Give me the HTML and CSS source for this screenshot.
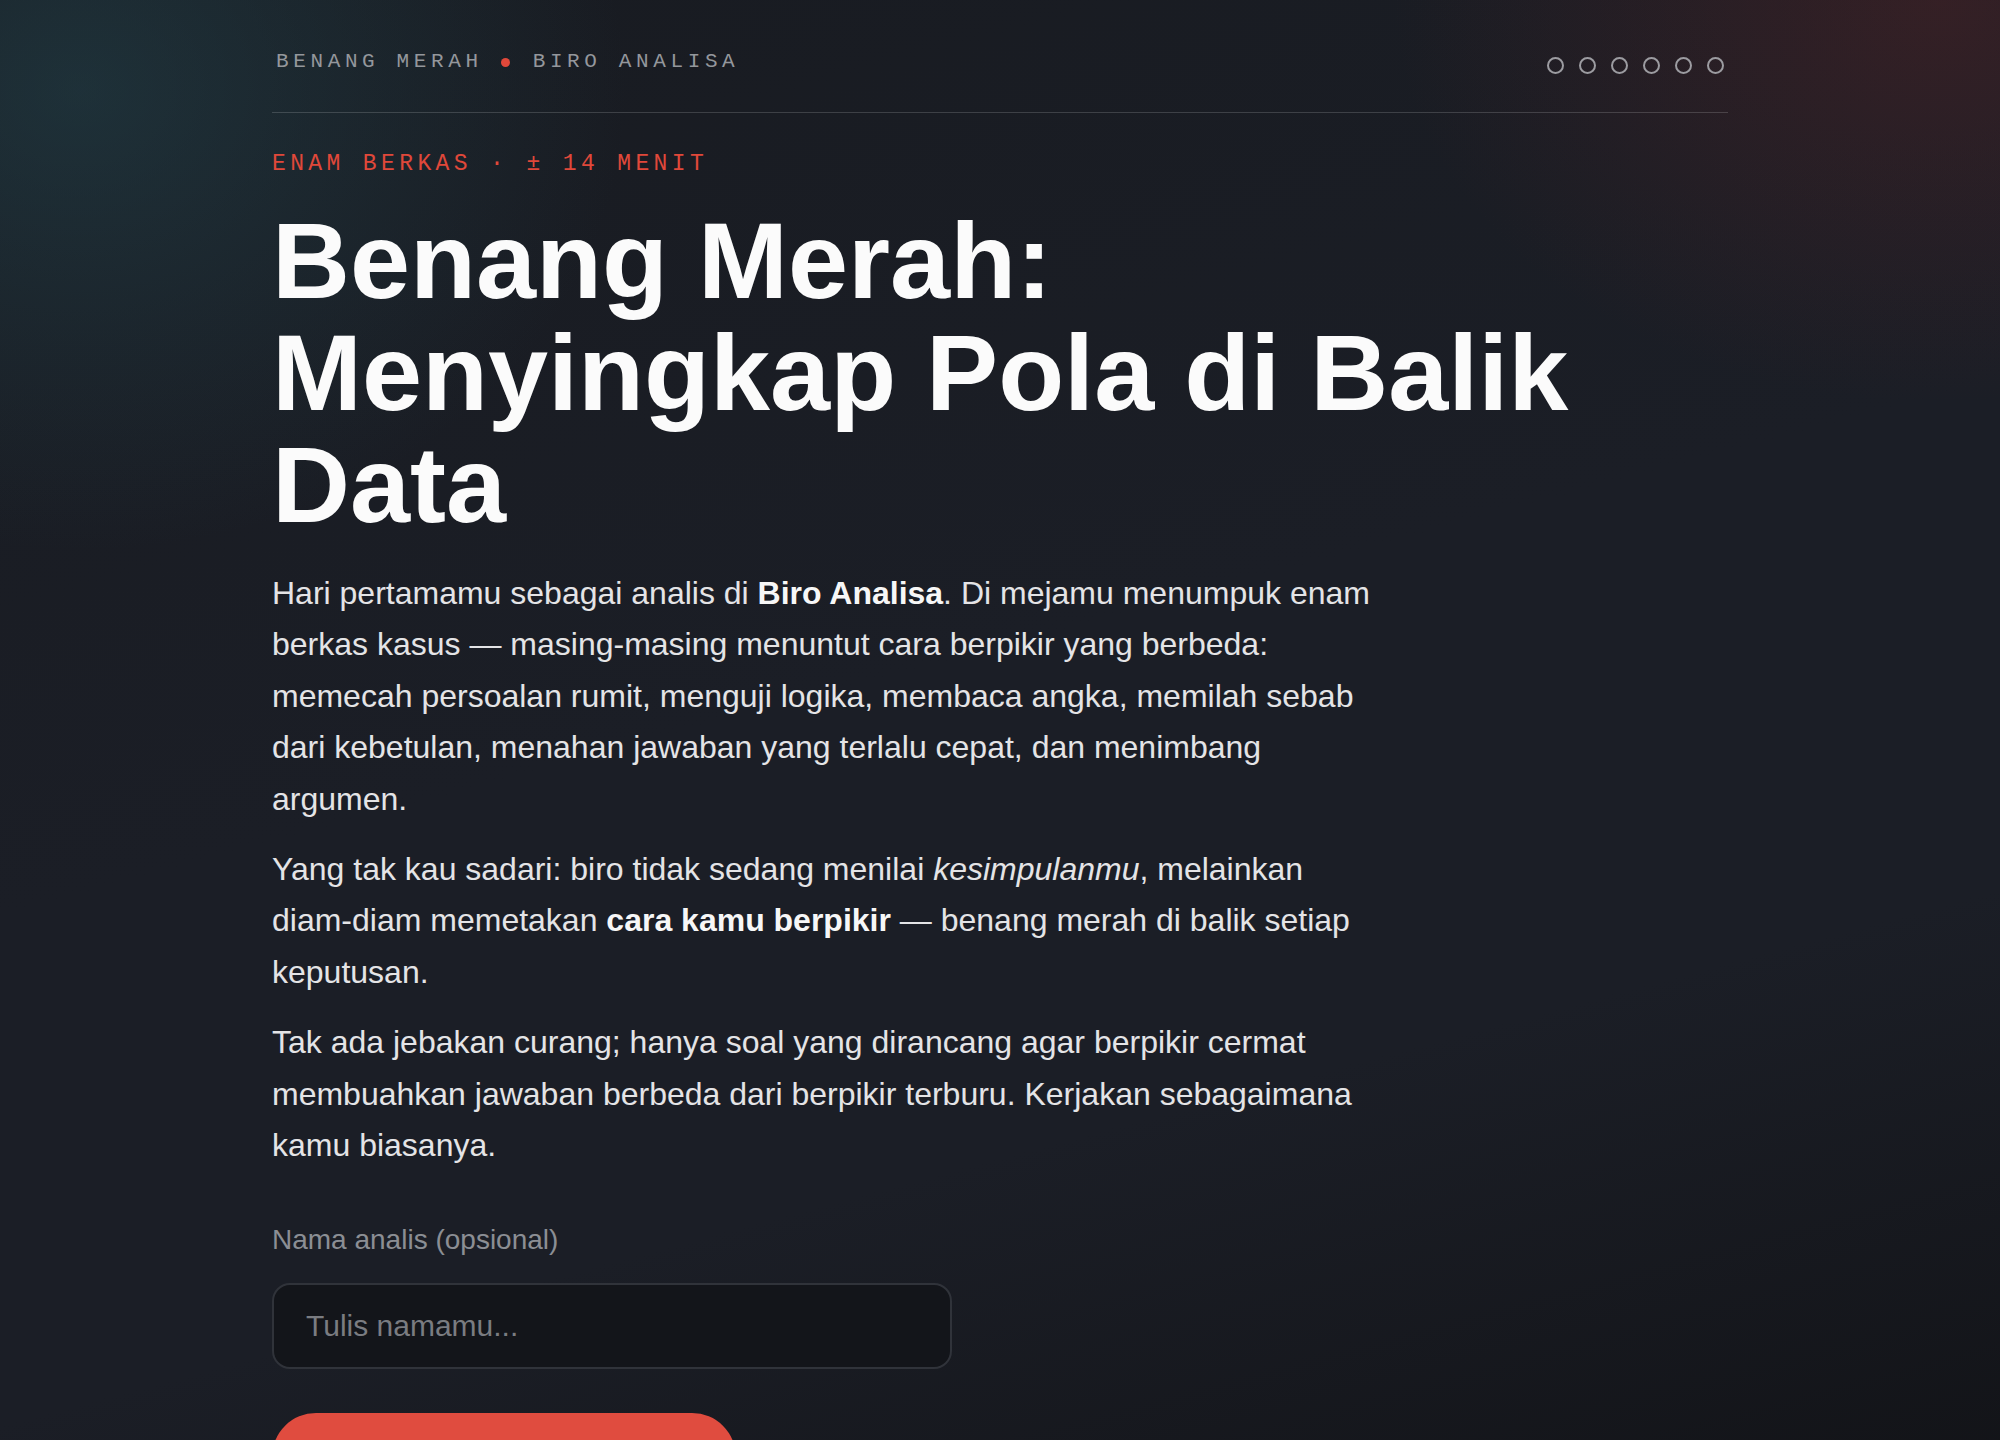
FILE: index.html
```html
<!DOCTYPE html>
<html lang="id">
<head>
<meta charset="utf-8">
<title>Benang Merah — Biro Analisa</title>
<link rel="stylesheet" href="styles.css">
</head>
<body>
<main class="page">
  <header class="topbar">
    <div class="brand">
      <span class="brand-name">BENANG MERAH</span>
      <span class="brand-dot"></span>
      <span class="brand-name">BIRO ANALISA</span>
    </div>
    <div class="progress">
      <span class="pip"></span><span class="pip"></span><span class="pip"></span><span class="pip"></span><span class="pip"></span><span class="pip"></span>
    </div>
  </header>

  <p class="kicker">ENAM BERKAS · ± 14 MENIT</p>
  <h1 class="title">Benang Merah:<br>Menyingkap Pola di Balik Data</h1>

  <div class="intro">
    <p>Hari pertamamu sebagai analis di <strong>Biro Analisa</strong>. Di mejamu menumpuk enam berkas kasus — masing-masing menuntut cara berpikir yang berbeda: memecah persoalan rumit, menguji logika, membaca angka, memilah sebab dari kebetulan, menahan jawaban yang terlalu cepat, dan menimbang argumen.</p>
    <p>Yang tak kau sadari: biro tidak sedang menilai <em>kesimpulanmu</em>, melainkan diam-diam memetakan <strong>cara kamu berpikir</strong> — benang merah di balik setiap keputusan.</p>
    <p>Tak ada jebakan curang; hanya soal yang dirancang agar berpikir cermat membuahkan jawaban berbeda dari berpikir terburu. Kerjakan sebagaimana kamu biasanya.</p>
  </div>

  <form class="start">
    <label class="field-label" for="nama">Nama analis (opsional)</label>
    <input class="field-input" id="nama" type="text" placeholder="Tulis namamu...">
    <button class="start-btn" type="button">Buka Berkas Pertama →</button>
  </form>
</main>
</body>
</html>
```

FILE: styles.css
```css
* { box-sizing: border-box; }

html, body { margin: 0; padding: 0; }

body {
  min-height: 1440px;
  font-family: "Liberation Sans", Arial, sans-serif;
  color: #e6e6e8;
  background-color: #1a1d24;
  background-image:
    radial-gradient(ellipse 760px 640px at 4% 6%, rgba(38, 78, 88, 0.42), rgba(38, 78, 88, 0) 72%),
    radial-gradient(ellipse 760px 560px at 97% 0%, rgba(110, 38, 40, 0.32), rgba(110, 38, 40, 0) 72%),
    linear-gradient(165deg, #181b21 0%, #1b1e26 45%, #1b1e26 70%, #121317 100%);
  background-repeat: no-repeat;
}

.page {
  width: 1456px;
  margin: 0 auto;
}

/* ---------- top bar ---------- */
.topbar {
  display: flex;
  justify-content: space-between;
  align-items: flex-end;
  padding: 50px 0 38px;
  border-bottom: 1px solid rgba(255, 255, 255, 0.16);
}

.brand {
  display: flex;
  align-items: center;
  font-family: "Liberation Mono", "DejaVu Sans Mono", monospace;
  font-size: 21px;
  line-height: 24px;
  letter-spacing: 0.22em;
  color: #94979c;
  padding-left: 4px;
}

.brand-dot {
  width: 9px;
  height: 9px;
  border-radius: 50%;
  background: #e0483a;
  margin: 0 23px 0 18px;
}

.progress {
  display: flex;
  gap: 15px;
  padding-right: 4px;
}

.pip {
  width: 17px;
  height: 17px;
  border-radius: 50%;
  border: 2px solid #9c9ca1;
}

/* ---------- heading ---------- */
.kicker {
  margin: 38px 0 0;
  font-family: "Liberation Mono", "DejaVu Sans Mono", monospace;
  font-size: 23px;
  line-height: 26px;
  letter-spacing: 0.19em;
  color: #e0483a;
}

.title {
  margin: 28px 0 0;
  font-family: "Liberation Sans", Arial, sans-serif;
  font-weight: 700;
  font-size: 108px;
  line-height: 112px;
  color: #fbfbfb;
}

/* ---------- intro ---------- */
.intro {
  max-width: 1104px;
  margin-top: 27px;
  margin-bottom: 49px;
  display: flex;
  flex-direction: column;
  gap: 19px;
}

.intro p {
  margin: 0;
  font-size: 32px;
  line-height: 51.4px;
  color: #e4e4e6;
}

.intro strong {
  font-weight: 700;
  color: #f7f7f7;
}

.intro em {
  font-style: italic;
}

/* ---------- form ---------- */
.start {
  display: flex;
  flex-direction: column;
  align-items: flex-start;
}

.field-label {
  font-size: 28px;
  line-height: 39px;
  color: #8b8e94;
}

.field-input {
  margin-top: 24px;
  width: 680px;
  padding: 23px 32px;
  font-family: "Liberation Sans", Arial, sans-serif;
  font-size: 30px;
  line-height: 36px;
  color: #e6e6e8;
  background: #13151a;
  border: 2px solid #30333a;
  border-radius: 18px;
  outline: none;
}

.field-input::placeholder {
  color: #7a7c81;
}

.start-btn {
  margin-top: 44px;
  width: 464px;
  height: 88px;
  border: none;
  border-radius: 44px;
  background: #e04c3f;
  color: #ffffff;
  font-family: "Liberation Sans", Arial, sans-serif;
  font-size: 30px;
  font-weight: 700;
}
```
